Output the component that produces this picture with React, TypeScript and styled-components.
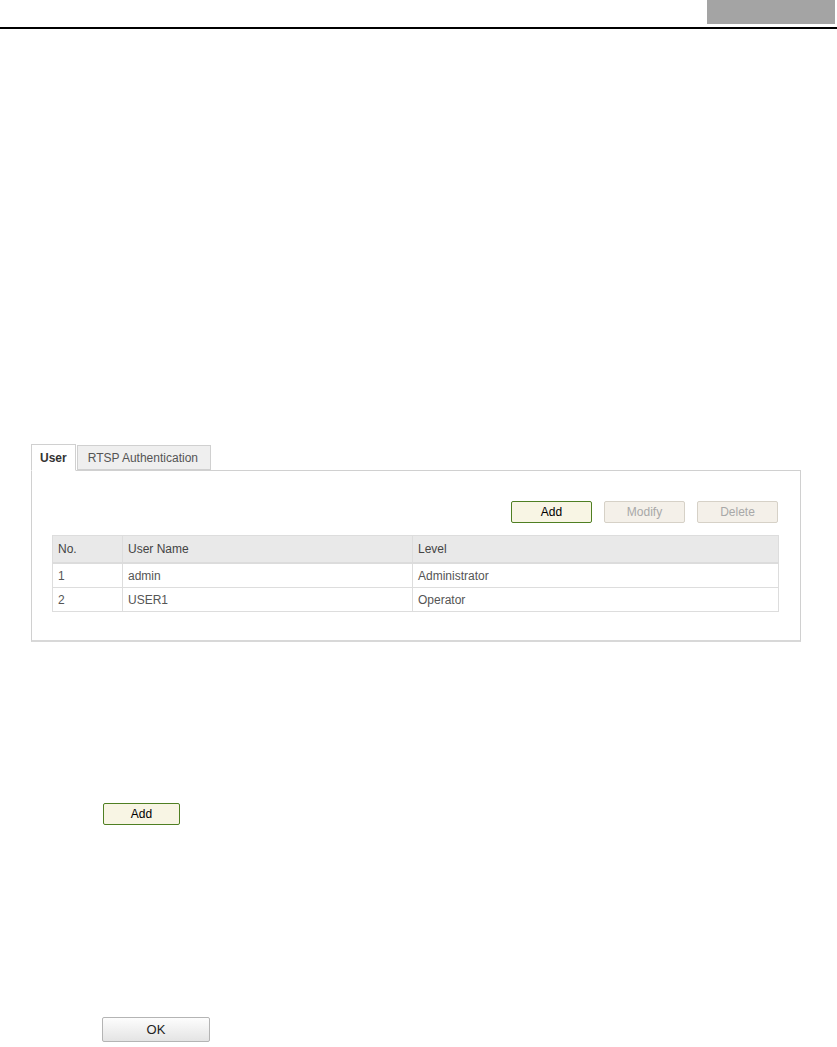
import React from 'react'
import styled, { createGlobalStyle } from 'styled-components'

const GlobalStyle = createGlobalStyle`
  html, body {
    margin: 0;
    padding: 0;
    background: #ffffff;
  }
  body {
    font-family: "Liberation Sans", Arial, sans-serif;
    font-size: 12px;
    color: #333333;
  }
`

const users = [
  { no: 1, name: 'admin', level: 'Administrator' },
  { no: 2, name: 'USER1', level: 'Operator' }
]

const App = () => {
  return (
    <Page>
      <GlobalStyle />
      <Header>
        <HeaderTag />
      </Header>

      <Section>
        <Tabs>
          <Tab active>User</Tab>
          <Tab>RTSP Authentication</Tab>
        </Tabs>
        <Panel>
          <Toolbar>
            <Button variant="primary">Add</Button>
            <Button variant="disabled">Modify</Button>
            <Button variant="disabled">Delete</Button>
          </Toolbar>
          <Table>
            <colgroup>
              <col style={{ width: 70 }} />
              <col style={{ width: 290 }} />
              <col />
            </colgroup>
            <thead>
              <tr>
                <Th>No.</Th>
                <Th>User Name</Th>
                <Th>Level</Th>
              </tr>
            </thead>
            <tbody>
              {users.map((u) => (
                <tr key={u.no}>
                  <Td>{u.no}</Td>
                  <Td>{u.name}</Td>
                  <Td>{u.level}</Td>
                </tr>
              ))}
            </tbody>
          </Table>
        </Panel>
      </Section>

      <StandaloneRow top={161}>
        <SmallButton>Add</SmallButton>
      </StandaloneRow>

      <StandaloneRow top={192}>
        <OkButton>OK</OkButton>
      </StandaloneRow>
    </Page>
  )
}
export default App

const Page = styled.div`
  width: 837px;
  min-height: 1047px;
`

const Header = styled.header`
  height: 27px;
  display: flex;
  justify-content: flex-end;
  align-items: flex-start;
  border-bottom: 2px solid #000000;
`

const HeaderTag = styled.div`
  width: 128px;
  height: 24px;
  margin-right: 2px;
  background: #a4a4a4;
`

const Section = styled.section`
  margin: 415px 0 0 31px;
  width: 770px;
`

const Tabs = styled.div`
  display: flex;
  align-items: flex-end;
  gap: 1px;
  height: 27px;
  position: relative;
  z-index: 1;
`

const Tab = styled.div<{ active?: boolean }>`
  height: ${(p) => (p.active ? '27px' : '25px')};
  box-sizing: border-box;
  margin-bottom: ${(p) => (p.active ? '0' : '1px')};
  padding: ${(p) => (p.active ? '0 8px' : '0 12px 0 10px')};
  display: flex;
  align-items: center;
  border: 1px solid #d0d0d0;
  border-bottom: ${(p) => (p.active ? '1px solid #ffffff' : '1px solid #d0d0d0')};
  background: ${(p) => (p.active ? '#ffffff' : '#efefef')};
  color: ${(p) => (p.active ? '#333333' : '#555555')};
  font-weight: ${(p) => (p.active ? 'bold' : 'normal')};
  font-size: 12px;
  cursor: pointer;
`

const Panel = styled.div`
  margin-top: -1px;
  box-sizing: border-box;
  width: 770px;
  border: 1px solid #d0d0d0;
  border-bottom: 2px solid #d8d8d8;
  padding: 30px 22px 28px 20px;
`

const Toolbar = styled.div`
  display: flex;
  justify-content: flex-end;
  gap: 12px;
  margin-bottom: 12px;
`

const Button = styled.button<{ variant: 'primary' | 'disabled' }>`
  width: 81px;
  height: 22px;
  box-sizing: border-box;
  border-radius: 2px;
  font-family: "Liberation Sans", Arial, sans-serif;
  font-size: 12px;
  padding: 0;
  border: 1px solid ${(p) => (p.variant === 'primary' ? '#4f7f22' : '#d6d1c7')};
  background: ${(p) => (p.variant === 'primary' ? '#f8f5e4' : '#f4f0e9')};
  color: ${(p) => (p.variant === 'primary' ? '#000000' : '#a8a8a8')};
  cursor: ${(p) => (p.variant === 'primary' ? 'pointer' : 'default')};
`

const Table = styled.table`
  width: 727px;
  border-collapse: collapse;
  table-layout: fixed;
  border: 1px solid #dddddd;
`

const Th = styled.th`
  height: 26px;
  padding: 0 0 0 5px;
  text-align: left;
  font-weight: normal;
  font-size: 12px;
  color: #444444;
  background: #e9e9e9;
  border: 1px solid #dddddd;
  border-bottom: 2px solid #dcdcdc;
`

const Td = styled.td`
  height: 23px;
  padding: 0 0 0 5px;
  font-size: 12px;
  color: #555555;
  border: 1px solid #dddddd;
  border-top: 1px solid #e2e2e2;
`

const StandaloneRow = styled.div<{ top: number }>`
  margin-top: ${(p) => p.top}px;
  padding-left: 103px;
  display: flex;
`

const SmallButton = styled.button`
  width: 77px;
  height: 22px;
  box-sizing: border-box;
  border: 1px solid #4f7f22;
  border-radius: 2px;
  background: #f8f5e4;
  color: #000000;
  font-family: "Liberation Sans", Arial, sans-serif;
  font-size: 12px;
  padding: 0;
`

const OkButton = styled.button`
  margin-left: -1px;
  width: 108px;
  height: 25px;
  box-sizing: border-box;
  border: 1px solid #b4b4b4;
  border-radius: 2px;
  background: linear-gradient(#fdfdfd, #e4e4e4);
  color: #222222;
  font-family: "Liberation Sans", Arial, sans-serif;
  font-size: 13px;
  padding: 0;
`
